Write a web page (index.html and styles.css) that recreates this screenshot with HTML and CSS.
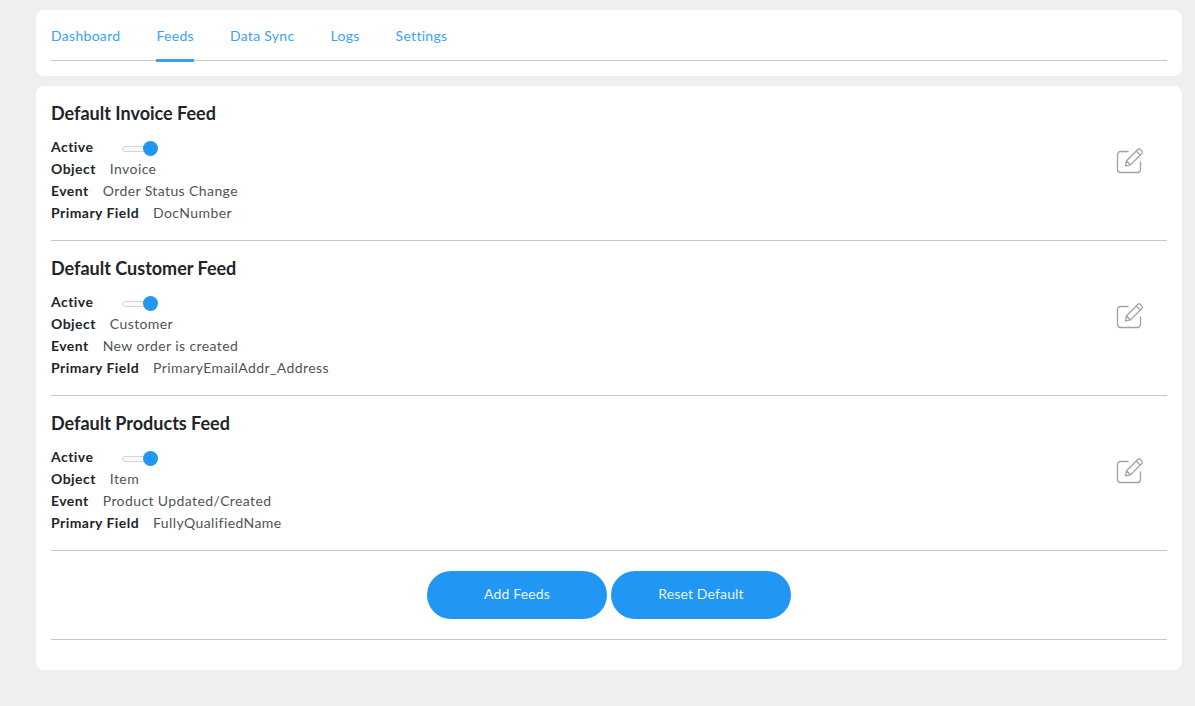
FILE: index.html
```html
<!DOCTYPE html>
<html lang="en">
<head>
<meta charset="utf-8">
<title>Feeds</title>
<link rel="stylesheet" href="styles.css">
</head>
<body>
<main class="page">
  <nav class="card nav-card">
    <ul class="tabs">
      <li class="tab">Dashboard</li>
      <li class="tab active">Feeds</li>
      <li class="tab">Data Sync</li>
      <li class="tab">Logs</li>
      <li class="tab">Settings</li>
    </ul>
  </nav>
  <section class="card content-card">
    <article class="feed">
      <div class="feed-info">
        <h2 class="feed-title">Default Invoice Feed</h2>
        <div class="row"><b class="label">Active</b><span class="switch"><span class="track"></span><span class="knob"></span></span></div>
        <div class="row"><b class="label">Object</b><span class="value">Invoice</span></div>
        <div class="row"><b class="label">Event</b><span class="value">Order Status Change</span></div>
        <div class="row"><b class="label">Primary Field</b><span class="value">DocNumber</span></div>
      </div>
      <svg class="edit" viewBox="0 0 28 28" aria-hidden="true"><path d="M12 4.5H4.5a3 3 0 0 0-3 3v15a3 3 0 0 0 3 3h17a3 3 0 0 0 3-3V15"/><path d="M9.5 18.8l1-5L22 2.3a1.6 1.6 0 0 1 2.2 0l1.8 1.8a1.6 1.6 0 0 1 0 2.2L14.5 17.9zM10.5 13.8l4 4.1M20.2 4l4 4.1"/></svg>
    </article>
    <article class="feed">
      <div class="feed-info">
        <h2 class="feed-title">Default Customer Feed</h2>
        <div class="row"><b class="label">Active</b><span class="switch"><span class="track"></span><span class="knob"></span></span></div>
        <div class="row"><b class="label">Object</b><span class="value">Customer</span></div>
        <div class="row"><b class="label">Event</b><span class="value">New order is created</span></div>
        <div class="row"><b class="label">Primary Field</b><span class="value">PrimaryEmailAddr_Address</span></div>
      </div>
      <svg class="edit" viewBox="0 0 28 28" aria-hidden="true"><path d="M12 4.5H4.5a3 3 0 0 0-3 3v15a3 3 0 0 0 3 3h17a3 3 0 0 0 3-3V15"/><path d="M9.5 18.8l1-5L22 2.3a1.6 1.6 0 0 1 2.2 0l1.8 1.8a1.6 1.6 0 0 1 0 2.2L14.5 17.9zM10.5 13.8l4 4.1M20.2 4l4 4.1"/></svg>
    </article>
    <article class="feed">
      <div class="feed-info">
        <h2 class="feed-title">Default Products Feed</h2>
        <div class="row"><b class="label">Active</b><span class="switch"><span class="track"></span><span class="knob"></span></span></div>
        <div class="row"><b class="label">Object</b><span class="value">Item</span></div>
        <div class="row"><b class="label">Event</b><span class="value">Product Updated/Created</span></div>
        <div class="row"><b class="label">Primary Field</b><span class="value">FullyQualifiedName</span></div>
      </div>
      <svg class="edit" viewBox="0 0 28 28" aria-hidden="true"><path d="M12 4.5H4.5a3 3 0 0 0-3 3v15a3 3 0 0 0 3 3h17a3 3 0 0 0 3-3V15"/><path d="M9.5 18.8l1-5L22 2.3a1.6 1.6 0 0 1 2.2 0l1.8 1.8a1.6 1.6 0 0 1 0 2.2L14.5 17.9zM10.5 13.8l4 4.1M20.2 4l4 4.1"/></svg>
    </article>
    <div class="actions">
      <button class="btn">Add Feeds</button>
      <button class="btn">Reset Default</button>
    </div>
  </section>
</main>
</body>
</html>
```

FILE: styles.css
```css
* { box-sizing: border-box; }
html, body { margin: 0; height: 100%; }
body {
  background: #efefef;
  font-family: "Lato", "Noto Sans", sans-serif;
  font-size: 14px;
  color: #4a4f55;
  overflow: hidden;
}
.page {
  padding: 10px 13px 0 36px;
  display: flex;
  flex-direction: column;
  gap: 10px;
}
.card {
  background: #fff;
  border-radius: 8px;
  padding: 0 15px;
}
.nav-card { height: 66px; }
.tabs {
  list-style: none;
  margin: 0;
  padding: 0;
  height: 51px;
  display: flex;
  gap: 36px;
  border-bottom: 1px solid #c8c8c8;
}
.tab {
  color: #2196f3;
  font-size: 14px;
  line-height: 20px;
  letter-spacing: .3px;
  padding-top: 16px;
  height: 52px;
  opacity: .88;
}
.tab.active {
  border-bottom: 3px solid #2196f3;
  border-radius: 0 0 1px 1px;
}
.content-card {
  height: 584px;
}
.feed {
  height: 155px;
  display: flex;
  justify-content: space-between;
  align-items: flex-start;
  border-bottom: 1px solid #c8c8c8;
}
.feed-title {
  margin: 0;
  padding-top: 15px;
  height: 50px;
  font-size: 18px;
  line-height: 24px;
  font-weight: 700;
  color: #212529;
}
.row {
  display: flex;
  align-items: center;
  height: 22px;
  line-height: 22px;
}
.label {
  color: #212529;
  font-weight: 700;
  letter-spacing: .45px;
  margin-right: 14px;
}
.value { color: #4f5459; letter-spacing: .4px; }
.switch {
  position: relative;
  display: block;
  width: 36px;
  height: 16px;
  margin: 3px 0 0 15px;
}
.track {
  position: absolute;
  left: 0;
  top: 5px;
  width: 30px;
  height: 6px;
  border: 1px solid #d4d4d4;
  border-radius: 3px;
  background: #fafafa;
}
.knob {
  position: absolute;
  right: 0;
  top: 0;
  width: 15px;
  height: 15px;
  border-radius: 50%;
  background: #2196f3;
}
.edit {
  width: 28px;
  height: 28px;
  margin: 61px 23px 0 0;
  fill: none;
  stroke: #a2a2a2;
  stroke-width: 1.3;
  stroke-linejoin: round;
  stroke-linecap: round;
}
.actions {
  height: 89px;
  padding-top: 20px;
  display: flex;
  justify-content: center;
  gap: 4px;
  border-bottom: 1px solid #c8c8c8;
}
.btn {
  width: 180px;
  height: 48px;
  padding: 0 0 3px;
  border: 0;
  border-radius: 24px;
  background: #2196f3;
  color: #e8f4fe;
  letter-spacing: .15px;
  font: 14px "Lato", "Noto Sans", sans-serif;
}
```
